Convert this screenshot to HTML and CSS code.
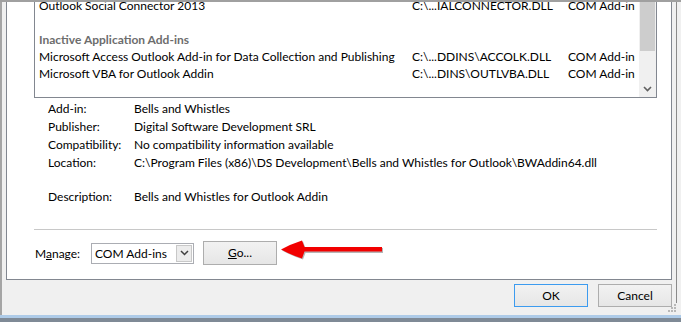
FILE: index.html
```html
<!DOCTYPE html>
<html>
<head>
<meta charset="utf-8">
<link rel="stylesheet" href="styles.css">
</head>
<body>
<div class="window">
  <div class="topline"></div>
  <div class="main">
    <div class="group">
      <div class="listbox">
        <div class="list-rows">
          <div class="row"><span class="c-name">Outlook Social Connector 2013</span><span class="c-loc">C:\...IALCONNECTOR.DLL</span><span class="c-type">COM Add-in</span></div>
          <div class="row"></div>
          <div class="row heading">Inactive Application Add-ins</div>
          <div class="row"><span class="c-name">Microsoft Access Outlook Add-in for Data Collection and Publishing</span><span class="c-loc">C:\...DDINS\ACCOLK.DLL</span><span class="c-type">COM Add-in</span></div>
          <div class="row"><span class="c-name">Microsoft VBA for Outlook Addin</span><span class="c-loc">C:\...DINS\OUTLVBA.DLL</span><span class="c-type">COM Add-in</span></div>
        </div>
        <div class="scrollbar">
          <div class="thumb"></div>
          <div class="track"></div>
          <div class="sb-arrow"><svg width="17" height="17" viewBox="0 0 17 17"><path d="M5 7 L8.5 10.5 L12 7" fill="none" stroke="#606060" stroke-width="1.6"/></svg></div>
        </div>
      </div>
      <div class="details">
        <div class="d-row"><span class="d-label">Add-in:</span><span>Bells and Whistles</span></div>
        <div class="d-row"><span class="d-label">Publisher:</span><span>Digital Software Development SRL</span></div>
        <div class="d-row"><span class="d-label">Compatibility:</span><span>No compatibility information available</span></div>
        <div class="d-row"><span class="d-label">Location:</span><span>C:\Program Files (x86)\DS Development\Bells and Whistles for Outlook\BWAddin64.dll</span></div>
        <div class="d-row d-desc"><span class="d-label">Description:</span><span>Bells and Whistles for Outlook Addin</span></div>
      </div>
      <div class="sep"></div>
      <div class="manage">
        <span class="m-label">M<u>a</u>nage:</span>
        <div class="select">
          <span class="sel-text">COM Add-ins</span>
          <span class="sel-btn"><svg width="9" height="6" viewBox="0 0 9 6"><path d="M1 1 L4.5 4.5 L8 1" fill="none" stroke="#404040" stroke-width="1.5"/></svg></span>
        </div>
        <div class="btn go"><u>G</u>o...</div>
        <svg class="red-arrow" width="104" height="22" viewBox="0 0 104 22">
          <path d="M1 10.5 Q11 5 22 1.5 L24.5 8 L102 8 L102 13 L24.5 13 L22 19.5 Q11 16 1 10.5 Z" fill="#7a7a7a" opacity="0.55"/>
          <path d="M0 9.5 Q10 4 21 0.5 L23.5 7 L101 7 L101 11.5 L23.5 11.5 L21 18.5 Q10 15 0 9.5 Z" fill="#f20000"/>
        </svg>
      </div>
    </div>
    <div class="buttons">
      <div class="btn ok">OK</div>
      <div class="btn cancel">Cancel</div>
    </div>
  </div>
  <div class="rframe"></div>
  <div class="grip">
    <svg width="9" height="9" viewBox="0 0 9 9" fill="#b8b8b8"><rect x="6" y="0" width="2" height="2"/><rect x="3" y="3" width="2" height="2"/><rect x="6" y="3" width="2" height="2"/><rect x="0" y="6" width="2" height="2"/><rect x="3" y="6" width="2" height="2"/><rect x="6" y="6" width="2" height="2"/></svg>
  </div>
  <div class="band-light"></div>
  <div class="band-dark"></div>
</div>
</body>
</html>
```
FILE: styles.css
```css
html, body {
  margin: 0;
  padding: 0;
}
body {
  width: 681px;
  height: 322px;
  overflow: hidden;
  background: #f0f0f0;
  font-family: "Lato", "Noto Sans", sans-serif;
  font-size: 12px;
  color: #000;
}
.window {
  position: relative;
  width: 681px;
  height: 322px;
  display: flex;
  flex-direction: column;
  border-left: 2px solid #a5a5a5;
  box-sizing: border-box;
}
.topline {
  height: 2px;
  background: #a0a0a0;
  margin-left: -2px;
}
.main {
  flex: 1;
  padding-left: 4px;
  display: flex;
  flex-direction: column;
  width: 666px;
}
.group {
  background: #fff;
  border: 1px solid #828790;
  border-top: none;
  padding-bottom: 14px;
}
.listbox {
  margin-left: 27px;
  width: 623px;
  height: 96px;
  box-sizing: border-box;
  border: 1px solid #828790;
  border-top: none;
  display: flex;
  overflow: hidden;
}
.list-rows {
  flex: 1;
  padding-left: 4px;
  margin-top: -5px;
}
.row {
  display: flex;
  height: 17px;
  line-height: 17px;
  white-space: nowrap;
}
.row.heading {
  color: #6d6d6d;
  font-weight: 700;
}
.c-name { width: 373px; }
.c-loc { width: 156px; }
.scrollbar {
  width: 17px;
  background: #f0f0f0;
  display: flex;
  flex-direction: column;
}
.thumb {
  height: 49px;
  margin: 0 1px;
  background: #cdcdcd;
}
.track { flex: 1; }
.sb-arrow { height: 17px; }
.sb-arrow svg { display: block; }
.details {
  padding-left: 41px;
  margin-top: 2px;
}
.d-row {
  display: flex;
  height: 18px;
  line-height: 18px;
  white-space: nowrap;
}
.d-desc { margin-top: 16px; }
.d-label { width: 86px; }
.sep {
  margin: 23px 0 0 27px;
  width: 623px;
  height: 1px;
  background: #c8c8c8;
}
.manage {
  margin-top: 11px;
  padding-left: 28px;
  display: flex;
  align-items: center;
  height: 24px;
}
.m-label { width: 56px; }
.select {
  width: 103px;
  height: 21px;
  box-sizing: border-box;
  border: 1px solid #abadb3;
  display: flex;
  align-items: center;
  justify-content: space-between;
  padding: 0 1px 0 3px;
}
.sel-btn {
  width: 16px;
  height: 17px;
  box-sizing: border-box;
  border: 1px solid #c8c8c8;
  background: #ececec;
  display: flex;
  align-items: center;
  justify-content: center;
}
.sel-btn svg { display: block; }
.btn {
  box-sizing: border-box;
  border: 1px solid #adadad;
  background: linear-gradient(#f2f2f2, #e6e6e6);
  display: flex;
  align-items: center;
  justify-content: center;
  line-height: 1;
}
.go {
  margin-left: 9px;
  width: 74px;
  height: 24px;
}
.red-arrow {
  margin-left: 4px;
  margin-top: -5px;
  display: block;
}
.buttons {
  display: flex;
  justify-content: flex-end;
  gap: 10px;
  margin-top: 4px;
}
.ok, .cancel {
  width: 74px;
  height: 23px;
}
.ok { border-color: #3c9bef; }
.rframe {
  position: absolute;
  top: 2px;
  left: 674px;
  width: 1px;
  height: 301px;
  background: #8a8a8a;
}
.grip {
  position: absolute;
  right: 4px;
  bottom: 9px;
  line-height: 0;
}
.band-light {
  height: 3px;
  background: #aecbe8;
  margin-left: -2px;
}
.band-dark {
  height: 4px;
  background: #7f8a96;
  margin-left: -2px;
}
```
